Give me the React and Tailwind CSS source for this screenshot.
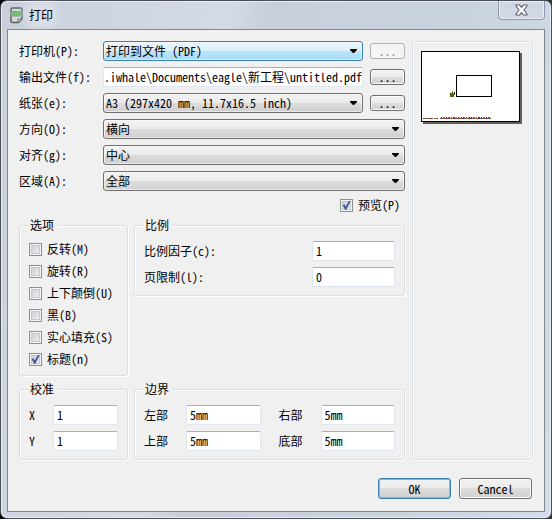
import React from 'react';

const FIELD =
  'h-5 w-full min-w-0 rounded-[2px] border border-[#dfe5ee] border-t-[#abadb3] bg-white px-[3px] pb-[2px] text-[12px] leading-4 text-black outline-none';

const PUSH =
  'rounded-[3px] border border-[#707070] bg-[linear-gradient(#f2f2f2_0%,#ebebeb_50%,#dddddd_50%,#cfcfcf_100%)] shadow-[inset_0_0_0_1px_#fbfbfb]';

function Row({ id, label, children }) {
  return (
    <div className="flex h-5 items-center">
      <label htmlFor={id} className="w-[84px] shrink-0 whitespace-pre">
        {label}
      </label>
      {children}
    </div>
  );
}

function Select({ id, value, active }) {
  const tone = active
    ? 'border-[#3c7fb1] bg-[linear-gradient(#eaf6fd_0%,#d9f0fc_50%,#bee6fd_50%,#a7d9f5_100%)]'
    : 'border-[#707070] bg-[linear-gradient(#f2f2f2_0%,#ebebeb_50%,#dddddd_50%,#cfcfcf_100%)]';
  return (
    <div className="relative min-w-0 flex-1">
      <select
        id={id}
        className={`block h-5 w-full appearance-none rounded-[3px] border px-[2px] text-[12px] leading-4 text-black shadow-[inset_0_0_0_1px_#fbfbfb99] outline-none ${tone}`}
      >
        <option>{value}</option>
      </select>
      <svg className="pointer-events-none absolute top-2 right-[6px]" width="7" height="4" viewBox="0 0 7 4">
        <path d="M0 0H7V1L4 4H3L0 1Z" fill="#000" />
      </svg>
    </div>
  );
}

function Browse({ name, disabled }) {
  return (
    <button
      type="button"
      aria-label={name}
      disabled={disabled}
      className={
        disabled
          ? 'ml-[7px] h-4 w-[35px] shrink-0 rounded-[3px] border border-[#adb2b5] bg-[#f4f4f4] text-[12px] leading-3 text-[#838383]'
          : `ml-[7px] h-4 w-[35px] shrink-0 text-[12px] leading-3 text-black ${PUSH}`
      }
    >
      ...
    </button>
  );
}

function Check({ label, checked }) {
  return (
    <label className="flex h-4 items-center gap-[5px] whitespace-pre">
      <span className="relative block size-[13px] shrink-0">
        <input
          type="checkbox"
          defaultChecked={checked}
          className="peer block size-[13px] appearance-none border border-[#8e8f8f] bg-[linear-gradient(135deg,#c3c8cf,#f6f6f6)] shadow-[inset_0_0_0_1px_#f4f4f4,inset_0_0_0_2px_#c4c8cd]"
        />
        <svg
          className="pointer-events-none absolute top-0 left-0 hidden peer-checked:block"
          width="13"
          height="13"
          viewBox="0 0 13 13"
        >
          <path d="M2.6 6L4.5 5.3L5.8 7.4L8.8 2H10.7L6.4 10.7H5.1Z" fill="#4059a0" />
        </svg>
      </span>
      {label}
    </label>
  );
}

function Group({ title, children }) {
  return (
    <fieldset className="min-w-0 rounded-[3px] border border-[#d5dfe5] px-[9px] pb-2 shadow-[1px_1px_0_#fff,inset_1px_1px_0_#fff]">
      <legend className="h-4 bg-[#f0f0f0] pr-1 pl-px leading-4">{title}</legend>
      <div className="pt-2">{children}</div>
    </fieldset>
  );
}

function Field({ id, label, value, labelClass, boxClass }) {
  return (
    <div className="flex h-5 min-w-0 items-center">
      <label htmlFor={id} className={`shrink-0 whitespace-pre ${labelClass}`}>
        {label}
      </label>
      <div className={boxClass}>
        <input id={id} defaultValue={value} className={FIELD} />
      </div>
    </div>
  );
}

function BoardIcon() {
  return (
    <svg width="13" height="17" viewBox="0 0 13 17">
      <path
        d="M2.5 1H10.5Q12 1 12 2.5V12L8.5 15.5H2.5Q1 15.5 1 14V2.5Q1 1 2.5 1Z"
        fill="#d5d9d9"
        stroke="#5c6464"
        strokeWidth="1.5"
      />
      <rect x="0.5" y="4" width="12" height="5.5" fill="#8b968b" />
      <text x="6.5" y="8.7" fontSize="5" fontWeight="700" textAnchor="middle" fill="#5fdc62" fontFamily="Liberation Sans, sans-serif">
        BRD
      </text>
      <path d="M8 15.5V12H12Z" fill="#fff" stroke="#3f4545" strokeWidth="0.8" />
    </svg>
  );
}

function PagePreview() {
  const inks = ['#7a2230', '#5a3a7e', '#a06040', '#8a6a20', '#803060', '#506a90'];
  return (
    <svg className="block" width="101" height="73" viewBox="0 0 101 73">
      <rect x="2" y="2" width="99" height="71" fill="#606060" />
      <rect x="0.5" y="0.5" width="98" height="70" fill="#fff" stroke="#000" />
      <rect x="35.5" y="24.5" width="35" height="21" fill="#fff" stroke="#000" />
      <path d="M29 42H31V40H32V42H34V44H33V46H29Z" fill="#7a7010" />
      <path d="M30 43H33V46H30Z" fill="#148014" />
      <path d="M33 41H34V43H33ZM29 42H30V43H29Z" fill="#111" />
      {Array.from({ length: 68 }, (_, i) => {
        const x = 2 + i;
        const blank = (x > 16 && x < 19) || x === 12;
        const tall = x > 19 && (i * 7) % 5 < 3;
        return blank ? null : (
          <rect key={i} x={x} y={tall ? 66 : 67} width="1" height={tall ? 2 : 1} fill={inks[(i * 5 + (i >> 2)) % 6]} />
        );
      })}
    </svg>
  );
}

export default function App() {
  return (
    <div className="bg-[linear-gradient(90deg,#000,#333)] font-['Noto_Sans_Mono_CJK_SC','Liberation_Mono','Noto_Sans_CJK_SC',monospace] text-[12px] leading-4 text-black">
      <div className="rounded-[7px] border border-[#4b4e59] bg-[linear-gradient(100deg,#c9d0dc_0%,#d3dbe7_36%,#c7cfdb_42%,#c9d4df_75%,#d3dce9_100%)] px-[6px] pb-[6px] shadow-[inset_0_0_0_1px_#e6edf5]">
        <header className="flex h-7 items-start justify-between">
          <div className="flex h-7 items-center gap-[6px] pl-[3px]">
            <BoardIcon />
            <h1 className="rounded-full bg-white/30 text-[12px] leading-4 font-normal shadow-[0_0_8px_6px_#ffffff4d]">打印</h1>
          </div>
          <button
            type="button"
            aria-label="关闭"
            className="flex h-[19px] w-[47px] items-center justify-center rounded-b-[4px] border border-t-0 border-[#8d98a8] bg-[#d0d8e3] shadow-[inset_0_0_0_1px_#e9eef5]"
          >
            <svg width="13" height="12" viewBox="0 0 13 12">
              <path
                d="M1 1H4.6L6.5 3.4L8.4 1H12V2L8.9 6L12 10V11H8.4L6.5 8.6L4.6 11H1V10L4.1 6L1 2Z"
                fill="#fff"
                stroke="#565a68"
                strokeWidth="1.1"
                strokeLinejoin="round"
              />
            </svg>
          </button>
        </header>

        <main className="border border-[#7f8790] bg-[#f0f0f0] px-[11px] pt-[11px] pb-3">
          <div className="flex gap-[7px]">
            <div className="min-w-0 flex-1">
              <div className="flex flex-col gap-[6px]">
                <Row id="printer" label="打印机(P):">
                  <Select id="printer" value="打印到文件 (PDF)" active />
                  <Browse name="打印机设置" disabled />
                </Row>
                <Row id="output" label="输出文件(f):">
                  <div className="min-w-0 flex-1">
                    <input
                      id="output"
                      defaultValue=".iwhale\Documents\eagle\新工程\untitled.pdf"
                      className="h-5 w-full rounded-[2px] border border-[#dfe5ee] border-t-[#abadb3] bg-white pb-[2px] text-right text-[12px] leading-4 outline-none"
                    />
                  </div>
                  <Browse name="选择输出文件" />
                </Row>
                <Row id="paper" label="纸张(e):">
                  <Select id="paper" value="A3 (297x420 mm, 11.7x16.5 inch)" />
                  <Browse name="纸张设置" />
                </Row>
                <Row id="orientation" label="方向(O):">
                  <Select id="orientation" value="横向" />
                </Row>
                <Row id="alignment" label="对齐(g):">
                  <Select id="alignment" value="中心" />
                </Row>
                <Row id="area" label="区域(A):">
                  <Select id="area" value="全部" />
                </Row>
              </div>

              <div className="mt-[6px] flex justify-end pr-[5px]">
                <Check label="预览(P)" checked />
              </div>

              <div className="mt-1 grid grid-cols-[109px_minmax(0,1fr)] items-start gap-x-[6px] gap-y-[5px]">
                <Group title="选项">
                  <div className="flex flex-col gap-[6px]">
                    <Check label="反转(M)" />
                    <Check label="旋转(R)" />
                    <Check label="上下颠倒(U)" />
                    <Check label="黑(B)" />
                    <Check label="实心填充(S)" />
                    <Check label="标题(n)" checked />
                  </div>
                </Group>
                <Group title="比例">
                  <div className="flex flex-col gap-[6px]">
                    <Field id="scale" label="比例因子(c):" value="1" labelClass="flex-1" boxClass="w-[83px]" />
                    <Field id="limit" label="页限制(l):" value="0" labelClass="flex-1" boxClass="w-[83px]" />
                  </div>
                </Group>
                <Group title="校准">
                  <div className="flex flex-col gap-[6px]">
                    <Field id="cx" label="X" value="1" labelClass="w-6" boxClass="min-w-0 flex-1" />
                    <Field id="cy" label="Y" value="1" labelClass="w-6" boxClass="min-w-0 flex-1" />
                  </div>
                </Group>
                <Group title="边界">
                  <div className="grid grid-cols-2 gap-x-[18px] gap-y-[6px]">
                    <Field id="left" label="左部" value="5mm" labelClass="w-[42px]" boxClass="min-w-0 flex-1" />
                    <Field id="right" label="右部" value="5mm" labelClass="w-[42px]" boxClass="min-w-0 flex-1" />
                    <Field id="top" label="上部" value="5mm" labelClass="w-[42px]" boxClass="min-w-0 flex-1" />
                    <Field id="bottom" label="底部" value="5mm" labelClass="w-[42px]" boxClass="min-w-0 flex-1" />
                  </div>
                </Group>
              </div>
            </div>

            <aside className="w-[121px] shrink-0 rounded-[3px] border border-[#d5dfe5] pt-[9px] pl-2 shadow-[1px_1px_0_#fff,inset_1px_1px_0_#fff]">
              <PagePreview />
            </aside>
          </div>

          <div className="mt-[18px] flex justify-end gap-2 pr-px">
            <button
              type="button"
              className="h-[21px] w-[73px] rounded-[3px] border border-[#3c7fb1] bg-[linear-gradient(#f2f2f2_0%,#ebebeb_50%,#dddddd_50%,#cfcfcf_100%)] text-[12px] leading-4 shadow-[inset_0_0_0_1px_#48d0f8]"
            >
              OK
            </button>
            <button type="button" className={`h-[21px] w-[73px] text-[12px] leading-4 ${PUSH}`}>
              Cancel
            </button>
          </div>
        </main>
      </div>
    </div>
  );
}
